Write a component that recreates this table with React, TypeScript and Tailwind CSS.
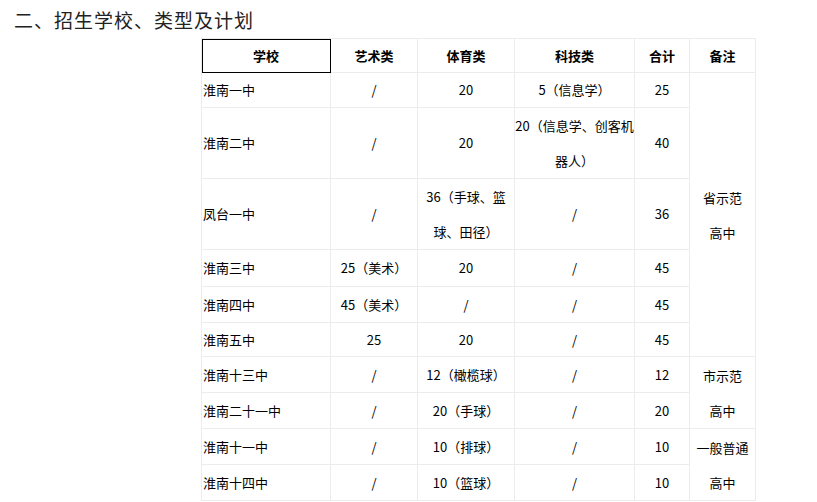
import React from "react";

type Row = {
  school: string;
  art: string;
  sport: React.ReactNode;
  tech: React.ReactNode;
  total: string;
  h: string;
};

const wrap = "block leading-[35px]";

const rows: Row[] = [
  { school: "淮南一中", art: "/", sport: "20", tech: "5（信息学）", total: "25", h: "h-[35px]" },
  {
    school: "淮南二中",
    art: "/",
    sport: "20",
    tech: (
      <span className={wrap}>
        20（信息学、创客机
        <br />
        器人）
      </span>
    ),
    total: "40",
    h: "h-[71px]",
  },
  {
    school: "凤台一中",
    art: "/",
    sport: (
      <span className={wrap}>
        36（手球、篮
        <br />
        球、田径）
      </span>
    ),
    tech: "/",
    total: "36",
    h: "h-[71px]",
  },
  { school: "淮南三中", art: "25（美术）", sport: "20", tech: "/", total: "45", h: "h-[37px]" },
  { school: "淮南四中", art: "45（美术）", sport: "/", tech: "/", total: "45", h: "h-[36px]" },
  { school: "淮南五中", art: "25", sport: "20", tech: "/", total: "45", h: "h-[34px]" },
  { school: "淮南十三中", art: "/", sport: "12（橄榄球）", tech: "/", total: "12", h: "h-[36px]" },
  { school: "淮南二十一中", art: "/", sport: "20（手球）", tech: "/", total: "20", h: "h-[36px]" },
  { school: "淮南十一中", art: "/", sport: "10（排球）", tech: "/", total: "10", h: "h-[36px]" },
  { school: "淮南十四中", art: "/", sport: "10（篮球）", tech: "/", total: "10", h: "h-[36px]" },
];

// rowspan groups for the 备注 column, keyed by the first row index
const notes: Record<number, { span: number; lines: string[] }> = {
  0: { span: 6, lines: ["省示范", "高中"] },
  6: { span: 2, lines: ["市示范", "高中"] },
  8: { span: 2, lines: ["一般普通", "高中"] },
};

const cell = "border border-[#ececec] p-0 align-middle leading-[30px]";

export default function App() {
  return (
    <div
      className="min-h-screen bg-white text-black"
      style={{ fontFamily: '"Noto Sans CJK SC", "Noto Sans", sans-serif' }}
    >
      <h2 className="pl-[14px] pt-[5px] text-[19px] leading-[30px] tracking-[1px] text-[#222]">
        二、招生学校、类型及计划
      </h2>
      <div className="pl-[201px] pt-[3px]">
        <table className="table-fixed border-collapse text-[13px]">
          <colgroup>
            <col className="w-[129px]" />
            <col className="w-[87px]" />
            <col className="w-[97px]" />
            <col className="w-[120px]" />
            <col className="w-[55px]" />
            <col className="w-[66px]" />
          </colgroup>
          <thead>
            <tr className="h-[34px] font-bold">
              <th className={`${cell} text-center outline outline-1 -outline-offset-1 outline-black`}>学校</th>
              <th className={`${cell} text-center`}>艺术类</th>
              <th className={`${cell} text-center`}>体育类</th>
              <th className={`${cell} text-center`}>科技类</th>
              <th className={`${cell} text-center`}>合计</th>
              <th className={`${cell} text-center`}>备注</th>
            </tr>
          </thead>
          <tbody>
            {rows.map((r, i) => (
              <tr key={r.school} className={r.h}>
                <td className={`${cell} pl-[1px] text-left`}>{r.school}</td>
                <td className={`${cell} text-center`}>{r.art}</td>
                <td className={`${cell} text-center`}>{r.sport}</td>
                <td className={`${cell} text-center`}>{r.tech}</td>
                <td className={`${cell} text-center`}>{r.total}</td>
                {notes[i] && (
                  <td rowSpan={notes[i].span} className={`${cell} text-center leading-[35px]`}>
                    {notes[i].lines.map((l) => (
                      <div key={l}>{l}</div>
                    ))}
                  </td>
                )}
              </tr>
            ))}
          </tbody>
        </table>
      </div>
    </div>
  );
}
